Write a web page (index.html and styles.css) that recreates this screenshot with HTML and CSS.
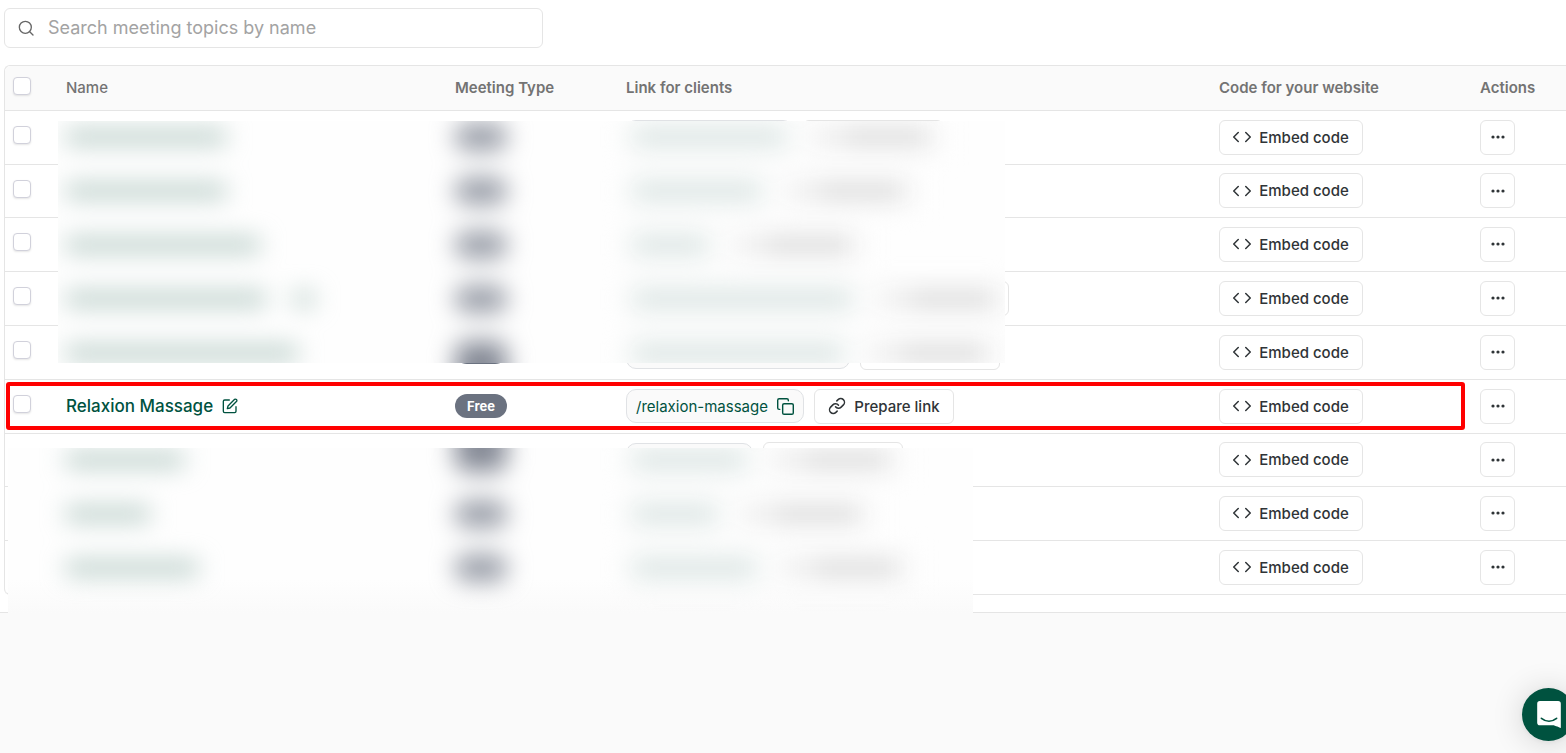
FILE: index.html
```html
<!DOCTYPE html>
<html lang="en">
<head>
    <meta charset="UTF-8">
    <meta name="viewport" content="width=device-width, initial-scale=1.0">
    <title>Meeting topics</title>
    <link rel="stylesheet" href="styles.css">
</head>
<body>
    <svg class="sprite" aria-hidden="true">
        <symbol id="icon-search" viewBox="0 0 24 24"><circle cx="11" cy="11" r="9"/><path d="M18 18l4.500 4.500"/></symbol>
        <symbol id="icon-edit" viewBox="0 0 24 24"><path d="M11 3H4a2 2 0 0 0-2 2v15a2 2 0 0 0 2 2h15a2 2 0 0 0 2-2v-7"/><path d="M19 2a2.200 2.200 0 0 1 3 3L12 15l-4 1 1-4z"/></symbol>
        <symbol id="icon-copy" viewBox="0 0 24 24"><rect x="8" y="8" width="15" height="15" rx="2"/><path d="M4 16H3a2 2 0 0 1-2-2V3a2 2 0 0 1 2-2h11a2 2 0 0 1 2 2v1"/></symbol>
        <symbol id="icon-link" viewBox="0 0 24 24"><path d="M10 13a5 5 0 0 0 7.540.540l3-3a5 5 0 0 0-7.070-7.070l-1.720 1.710"/><path d="M14 11a5 5 0 0 0-7.540-.540l-3 3a5 5 0 0 0 7.070 7.070l1.710-1.710"/></symbol>
        <symbol id="icon-code" viewBox="0 0 24 24"><path d="M17 18l6-6-6-6M7 6l-6 6 6 6"/></symbol>
        <symbol id="icon-dots" viewBox="0 0 16 16"><circle cx="3" cy="8" r="1.600"/><circle cx="8" cy="8" r="1.600"/><circle cx="13" cy="8" r="1.600"/></symbol>
    </svg>

    <main class="panel">
        <label class="search">
            <svg class="icon search-icon"><use href="#icon-search"/></svg>
            <input type="search" class="search-input" placeholder="Search meeting topics by name" aria-label="Search meeting topics by name">
        </label>

        <div class="table-wrap">
            <table class="topics">
                <colgroup>
                    <col class="col-check">
                    <col class="col-name">
                    <col class="col-type">
                    <col class="col-link">
                    <col class="col-code">
                    <col class="col-actions">
                </colgroup>
                <thead>
                    <tr>
                        <th class="cell-check"><input type="checkbox" class="checkbox" aria-label="Select all"></th>
                        <th class="th-name">Name</th>
                        <th>Meeting Type</th>
                        <th>Link for clients</th>
                        <th>Code for your website</th>
                        <th>Actions</th>
                    </tr>
                </thead>
                <tbody id="topicRows"></tbody>
            </table>
            <div class="privacy privacy-top"><div class="ghost-rows" id="ghostTop"></div></div>
            <div class="privacy privacy-bottom"><div class="ghost-rows" id="ghostBottom"></div></div>
        </div>
    </main>

    <button class="launcher" aria-label="Open chat">
        <svg class="launcher-icon" viewBox="0 0 28 32"><path fill="#fff" d="M28 32s-4.700-1.900-8.400-3.200H3.400A3 3 0 0 1 0 25.600V3.200A3.200 3.200 0 0 1 3.200 0h21.600A3.200 3.200 0 0 1 28 3.200z"/><path fill="none" stroke="#00523f" stroke-width="2" stroke-linecap="round" d="M5 20.500c5.500 4.400 12.500 4.400 18 0"/></svg>
    </button>

    <script>
        // private topics only have widths, their text is not shown
        const topics = [
            { name: 160, slug: 167 },
            { name: 160, slug: 142 },
            { name: 194, slug: 89 },
            { name: 200, extra: 20, slug: 233 },
            { name: 232, slug: 224, tall: 'down' },
            { title: 'Relaxion Massage', link: '/relaxion-massage' },
            { name: 118, slug: 127, tall: 'up' },
            { name: 84, slug: 98 },
            { name: 132, slug: 137 }
        ];

        const icon = (name) => `<svg class="icon icon-${name}"><use href="#icon-${name}"/></svg>`;

        const linkCell = (topic) => topic.title
            ? `<button class="slug" aria-label="Copy link">${topic.link}${icon('copy')}</button>
               <button class="btn btn-link">${icon('link')}Prepare link</button>`
            : `<button class="slug" style="width: ${topic.slug}px" aria-label="Copy link"></button>
               <button class="btn btn-link" aria-label="Prepare link"></button>`;

        document.getElementById('topicRows').innerHTML = topics.map(topic => `
            <tr class="${topic.title ? 'marked' : ''}">
                <td class="cell-check">
                    <input type="checkbox" class="checkbox" aria-label="Select topic">
                    ${topic.title ? '<span class="marker"></span>' : ''}
                </td>
                <td>${topic.title ? `<a href="#" class="topic-name">${topic.title}${icon('edit')}</a>` : ''}</td>
                <td><span class="badge">${topic.title ? 'Free' : ''}</span></td>
                <td><div class="link-cell">${linkCell(topic)}</div></td>
                <td><button class="btn btn-code">${icon('code')}Embed code</button></td>
                <td><button class="btn btn-more" aria-label="More actions">${icon('dots')}</button></td>
            </tr>`).join('');

        // blurred copies of the private rows
        const ghostRow = (topic) => `
            <div class="ghost-row">
                <div class="ghost-name">
                    <span class="bar bar-name" style="width: ${topic.name}px"></span>
                    ${topic.extra ? `<span class="bar bar-name" style="width: ${topic.extra}px"></span>` : ''}
                </div>
                <div class="ghost-type"><span class="ghost-badge ${topic.tall || ''}"></span></div>
                <div class="link-cell">
                    <span class="ghost-slug" style="width: ${topic.slug}px"><span class="bar bar-slug"></span></span>
                    <span class="ghost-link"><span class="bar bar-icon"></span><span class="bar bar-text"></span></span>
                </div>
            </div>`;

        document.getElementById('ghostTop').innerHTML = topics.slice(0, 5).map(ghostRow).join('');
        document.getElementById('ghostBottom').innerHTML = topics.slice(6).map(ghostRow).join('');
    </script>
</body>
</html>
```
FILE: styles.css
```css
* {
    box-sizing: border-box;
}

body {
    margin: 0;
    background-color: #fafafa;
    font-family: Inter, "Liberation Sans", sans-serif;
    font-size: 15px;
    color: #2f3437;
}

button,
input {
    font-family: inherit;
}

.sprite {
    display: none;
}

.icon {
    width: 16px;
    height: 16px;
    flex-shrink: 0;
    fill: none;
    stroke: currentColor;
    stroke-width: 2;
    stroke-linecap: round;
    stroke-linejoin: round;
}

.icon-copy {
    width: 17px;
    height: 17px;
}

.icon-link,
.icon-code {
    width: 18px;
    height: 18px;
}

.icon-dots {
    fill: currentColor;
    stroke: none;
}

.panel {
    background-color: #fff;
    border-bottom: 1px solid #e5e5e5;
    padding: 8px 0 17px 4px;
}

/* search */
.search {
    display: flex;
    align-items: center;
    gap: 14px;
    width: 539px;
    max-width: 100%;
    height: 40px;
    padding: 0 13px 1px;
    border: 1px solid #e5e5e5;
    border-radius: 6px;
    color: #666;
}

.search-input {
    flex: 1;
    border: none;
    outline: none;
    padding: 0;
    background: none;
    font-size: 18px;
}

.search-input::placeholder {
    color: #a3a3a3;
}

/* table */
.table-wrap {
    position: relative;
    margin-top: 17px;
    border: 1px solid #e5e5e5;
    border-width: 1px 0 0 1px;
    border-radius: 6px 0 0 6px;
}

.topics {
    width: 100%;
    table-layout: fixed;
    border-collapse: separate;
    border-spacing: 0;
}

.col-check {
    width: 45px;
}

.col-name {
    width: 389px;
}

.col-type {
    width: 171px;
}

.col-code {
    width: 261px;
}

.col-actions {
    width: 102px;
}

th,
td {
    padding: 0 0 1px 16px;
    border-bottom: 1px solid #e5e5e5;
    text-align: left;
    vertical-align: middle;
    white-space: nowrap;
}

th {
    height: 45px;
    background-color: #fafafa;
    color: #737373;
    font-weight: 600;
}

th:first-child {
    border-top-left-radius: 6px;
}

.th-name {
    font-weight: 500;
}

td {
    height: 54px;
}

tr:nth-child(5n + 2) td {
    height: 53px;
}

tr:last-child td:first-child {
    border-bottom-left-radius: 6px;
}

.cell-check {
    padding: 0 0 5px 8px;
}

.checkbox {
    appearance: none;
    display: block;
    width: 18px;
    height: 18px;
    margin: 0;
    border: 1px solid #d1d1db;
    border-radius: 4px;
    background-color: #fff;
    box-shadow: 0 1px 2px rgba(0, 0, 0, 0.1);
}

.topic-name {
    display: flex;
    align-items: center;
    gap: 9px;
    color: #00523f;
    font-size: 17px;
    font-weight: 500;
    text-decoration: none;
}

.badge {
    display: block;
    width: 52px;
    height: 24px;
    border-radius: 12px;
    background-color: #6b7280;
    color: #fff;
    font-size: 13px;
    line-height: 24px;
    font-weight: 700;
    text-align: center;
}

.link-cell {
    display: flex;
    align-items: center;
    gap: 10px;
}

.slug {
    display: flex;
    align-items: center;
    gap: 9px;
    height: 34px;
    padding: 0 9px;
    border: 1px solid #e0e2e5;
    border-radius: 10px;
    background-color: #fafafa;
    color: #00523f;
    font-size: 15px;
}

.btn {
    display: flex;
    align-items: center;
    justify-content: center;
    gap: 8px;
    height: 35px;
    padding: 0;
    border: 1px solid #e5e5e5;
    border-radius: 6px;
    background-color: #fff;
    color: #2f3437;
    font-size: 15px;
    font-weight: 500;
}

.btn-link {
    width: 140px;
}

.btn-code {
    width: 144px;
}

.btn-more {
    width: 35px;
}

/* covers over the private rows */
.privacy {
    position: absolute;
    overflow: hidden;
    background-color: #fefefe;
}

.privacy-top {
    left: 53px;
    top: 55px;
    width: 947px;
    height: 242px;
}

.privacy-bottom {
    left: 3px;
    top: 382px;
    width: 965px;
    height: 165px;
    background-image: linear-gradient(#fefefe 80%, #fafafa);
}

.ghost-rows {
    filter: blur(12px);
}

.privacy-top .ghost-rows {
    margin: -11px 0 0 8px;
}

.privacy-bottom .ghost-rows {
    margin: -15px 0 0 58px;
}

.ghost-row {
    display: grid;
    grid-template-columns: 389px 171px auto;
    align-items: center;
    height: 54px;
}

.ghost-name {
    display: flex;
    gap: 28px;
}

.bar {
    height: 14px;
}

.bar-name {
    background-color: #b4cac4;
}

.bar-slug {
    flex: 1;
    background-color: #d6e1e0;
}

.bar-icon {
    width: 16px;
    background-color: #e4e4e4;
}

.bar-text {
    width: 86px;
    background-color: #d4d4d4;
}

.ghost-type {
    display: flex;
    align-items: center;
    height: 24px;
}

.ghost-badge {
    width: 52px;
    height: 26px;
    border-radius: 12px;
    background-color: #9297a2;
}

.ghost-badge.down {
    height: 48px;
    margin-top: 24px;
    background-color: #858a96;
}

.ghost-badge.up {
    height: 48px;
    margin-bottom: 24px;
    background-color: #858a96;
}

.ghost-slug {
    display: flex;
    align-items: center;
    height: 34px;
    padding: 0 9px;
    border-radius: 10px;
    background-color: #f4f7f6;
}

.ghost-link {
    display: flex;
    align-items: center;
    justify-content: center;
    gap: 8px;
    width: 140px;
    height: 34px;
    background-color: #fafafa;
}

/* red frame round the marked topic */
.marked {
    position: relative;
}

.marker {
    position: absolute;
    left: 1px;
    right: 101px;
    top: 2px;
    bottom: 4px;
    border: 4px solid #f00;
    border-radius: 3px;
    pointer-events: none;
}

.launcher {
    position: fixed;
    right: -9px;
    bottom: 12px;
    width: 53px;
    height: 53px;
    padding: 0;
    border: none;
    border-radius: 50%;
    background-color: #00523f;
    box-shadow: 0 1px 6px rgba(0, 0, 0, 0.06), 0 2px 32px rgba(0, 0, 0, 0.16);
}

.launcher-icon {
    display: block;
    width: 24px;
    height: 27px;
    margin: 0 auto;
}
```
